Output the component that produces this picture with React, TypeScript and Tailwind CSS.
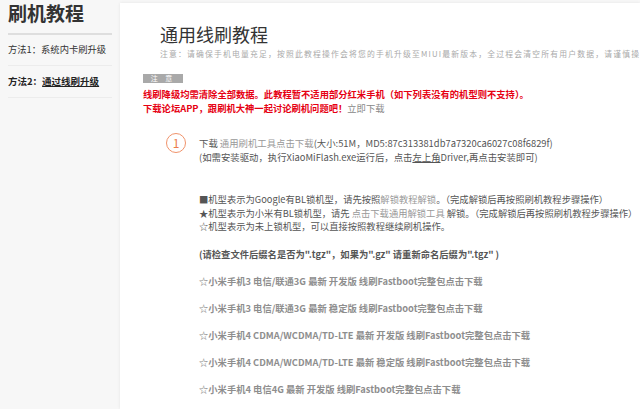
import React from "react";

const font = { fontFamily: '"Noto Sans CJK SC", "Noto Sans", sans-serif' };

export default function App() {
  const items = [
    "☆小米手机3 电信/联通3G 最新 开发版 线刷Fastboot完整包点击下载",
    "☆小米手机3 电信/联通3G 最新 稳定版 线刷Fastboot完整包点击下载",
    "☆小米手机4 CDMA/WCDMA/TD-LTE 最新 开发版 线刷Fastboot完整包点击下载",
    "☆小米手机4 CDMA/WCDMA/TD-LTE 最新 稳定版 线刷Fastboot完整包点击下载",
    "☆小米手机4 电信4G 最新 开发版 线刷Fastboot完整包点击下载",
  ];
  return (
    <div
      className="flex h-[409px] w-[640px] overflow-hidden bg-[#f7f7f7] text-[#555]"
      style={font}
    >
      <aside className="w-[120px] shrink-0 px-2">
        <h1 className="text-[19px] font-bold leading-[26px] text-[#333]">刷机教程</h1>
        <div className="mt-[7px] border-t-2 border-[#dedede]" />
        <div className="flex h-[31px] items-center border-b border-[#ececec] text-[9.3px] text-[#333]">
          方法1：系统内卡刷升级
        </div>
        <div className="flex h-[32px] items-center border-b border-[#ececec] text-[9.5px] font-bold text-[#222]">
          方法2：<span className="underline">通过线刷升级</span>
        </div>
      </aside>
      <main className="mt-[3px] flex-1 overflow-hidden bg-white shadow-[0_0_3px_rgba(0,0,0,0.08)]">
        <div className="pt-[19px]">
          <h2 className="pl-[40px] text-[18px] leading-[24px] text-[#333]">通用线刷教程</h2>
          <p className="mt-[2px] whitespace-nowrap pl-[40px] text-[7.8px] leading-[12px] tracking-[1.2px] text-[#aaa]">
            注意：请确保手机电量充足，按照此教程操作会将您的手机升级至MIUI最新版本，全过程会清空所有用户数据，请谨慎操作！
          </p>
          <div className="mt-[14px] pl-[23px]">
            <div className="flex h-[9px] w-[40px] items-center justify-center bg-[#a9a9a9] text-[7px] leading-none tracking-[3px] text-white">
              注 意
            </div>
            <p className="mt-[4px] whitespace-nowrap text-[9.3px] font-bold leading-[14px] text-[#e60012]">
              线刷降级均需清除全部数据。此教程暂不适用部分红米手机（如下列表没有的机型则不支持）。
            </p>
            <p className="whitespace-nowrap text-[9.3px] leading-[14px]">
              <span className="font-bold text-[#e60012]">下载论坛APP，跟刷机大神一起讨论刷机问题吧！</span>
              <span className="text-[#888]">立即下载</span>
            </p>
          </div>
          <div className="mt-[18px] flex items-start pl-[46px]">
            <div className="flex h-[20px] w-[20px] shrink-0 items-center justify-center rounded-full border-[1.5px] border-[#f0936b] text-[12px] leading-none text-[#ec7c4e]">
              1
            </div>
            <div className="ml-[13px] whitespace-nowrap pt-[3px] text-[9.4px] leading-[14px]">
              <p>
                下载 <span className="text-[#999]">通用刷机工具点击下载</span>(大小:51M，MD5:87c313381db7a7320ca6027c08f6829f)
              </p>
              <p>
                (如需安装驱动，执行XiaoMiFlash.exe运行后，点击<span className="underline">左上角</span>Driver,再点击安装即可)
              </p>
            </div>
          </div>
          <div className="mt-[29px] flex flex-col gap-[13px] whitespace-nowrap pl-[79px] text-[9.3px]">
            <div className="leading-[13.5px]">
              <p>
                ■机型表示为Google有BL锁机型，请先按照<span className="text-[#999]">解锁教程解锁</span>。（完成解锁后再按照刷机教程步骤操作）
              </p>
              <p>
                ★机型表示为小米有BL锁机型，请先 <span className="text-[#999]">点击下载通用解锁工具</span> 解锁。（完成解锁后再按照刷机教程步骤操作）
              </p>
              <p>☆机型表示为未上锁机型，可以直接按照教程继续刷机操作。</p>
            </div>
            <p className="font-bold leading-[14px] text-[#555]">
              (请检查文件后缀名是否为".tgz"，如果为".gz" 请重新命名后缀为".tgz" )
            </p>
            {items.map((t) => (
              <p key={t} className="font-bold leading-[14px] text-[#8e8e8e]">
                {t}
              </p>
            ))}
          </div>
        </div>
      </main>
    </div>
  );
}
